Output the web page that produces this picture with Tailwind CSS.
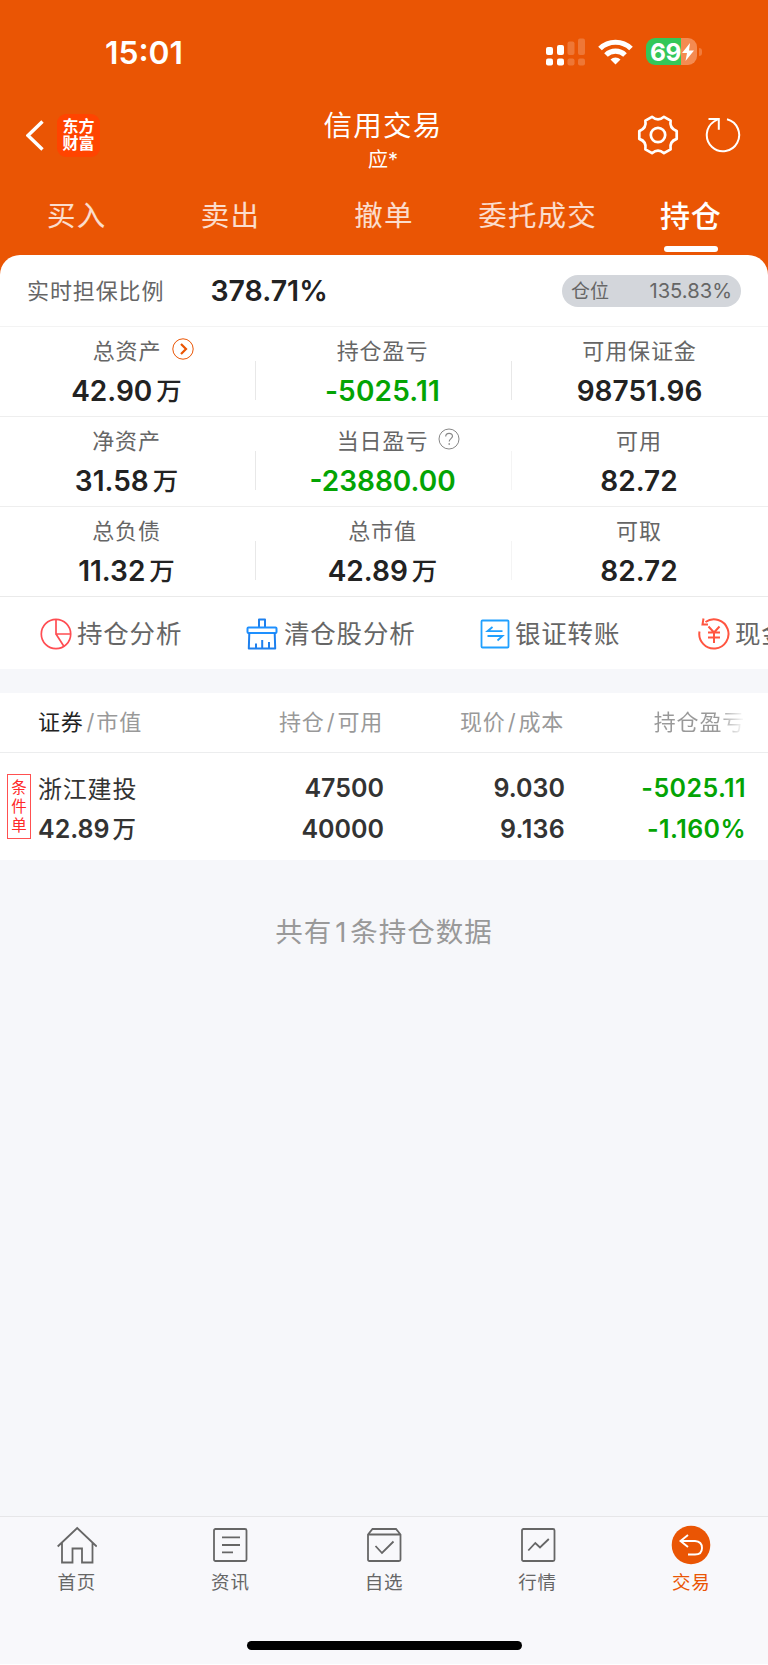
<!DOCTYPE html>
<html lang="zh-CN">
<head>
<meta charset="utf-8">
<title>信用交易</title>
<script src="https://cdn.jsdelivr.net/npm/@tailwindcss/browser@4"></script>
</head>
<body class="bg-white">
<div class="w-[768px] h-[1664px] overflow-hidden flex flex-col bg-[#f6f7fa] font-['Inter','Noto_Sans_CJK_SC',sans-serif] text-[#222]">

  <header class="h-[275px] shrink-0 bg-[#ea5504] text-white flex flex-col">
    <!-- status bar -->
    <div class="h-[104px] flex justify-between pl-[105px] pr-[66px]">
      <div class="h-[105px] flex items-center text-[31.800px] font-semibold leading-none">15:01</div>
      <div class="h-[103px] flex items-center">
        <svg class="w-[40px] h-[28px]" viewBox="0 0 40 28" fill="#fff">
          <rect x="0" y="9" width="7" height="8" rx="2"/><rect x="11" y="7" width="7" height="10" rx="2"/>
          <rect x="0" y="20.500" width="7" height="7" rx="2"/><rect x="11" y="20.500" width="7" height="7" rx="2"/>
          <g opacity=".2"><rect x="21.500" y="3.500" width="7" height="13.500" rx="2"/><rect x="32" y="0.500" width="7" height="16.500" rx="2"/><rect x="21.500" y="20.500" width="7" height="7" rx="2"/><rect x="32" y="20.500" width="7" height="7" rx="2"/></g>
        </svg>
        <svg class="w-[35px] h-[26px] ml-[12px]" viewBox="0 0 35 26" fill="none" stroke="#fff" stroke-width="5.200">
          <path d="M2 9.500a22.300 22.300 0 0 1 31 0"/><path d="M8 16a13.700 13.700 0 0 1 19 0"/><path d="M12.500 20.500a7.500 7.500 0 0 1 10 0L17.500 25.500z" fill="#fff" stroke="none"/>
        </svg>
        <div class="ml-[13px] w-[51px] h-[27px] rounded-[9px] flex items-center bg-[linear-gradient(90deg,#34c759_35px,#f48b52_35px)]">
          <span class="pl-[4px] pt-[1px] text-[24.500px] font-bold leading-[26px] tracking-[-0.500px]">69</span>
          <svg class="w-[12px] h-[18px] ml-[1px]" viewBox="0 0 12 18" fill="#fff"><path d="M8 0L0 10h5L3.500 18 12 7.500H7z"/></svg>
        </div>
        <div class="ml-[2px] w-[3px] h-[8px] rounded-r-full bg-[#f27b3a]"></div>
      </div>
    </div>
    <!-- title bar -->
    <div class="h-[76px] grid grid-cols-3">
      <div class="h-[62px] flex items-center pl-[26px]">
        <svg class="w-[18px] h-[31px]" viewBox="0 0 18 31" fill="none" stroke="#fff" stroke-width="3.400"><path d="M16.500 1.500L2 15.500l14.500 14"/></svg>
        <div class="ml-[13px] w-[43px] h-[43px] rounded-[9px] bg-[#ff4400] flex flex-col items-center justify-center text-[16px] leading-[17px] font-bold">
          <span>东方</span><span>财富</span>
        </div>
      </div>
      <div class="flex flex-col items-center pr-[2px]">
        <div class="h-[44px] flex items-center text-[28.500px] leading-none tracking-[1.300px]">信用交易</div>
        <div class="h-[24px] flex items-center text-[20px] leading-none">应*</div>
      </div>
      <div class="h-[62px] flex items-center justify-end pr-[26px] gap-[25px]">
        <svg class="w-[42px] h-[42px]" viewBox="-21 -21 42 42" fill="none" stroke="#fff" stroke-width="2.700" stroke-linejoin="round">
          <circle r="7.200"/>
          <path d="M-6 -18.200Q0 -13 6 -18.200L12.600 -14.400Q11.200 -6.500 18.700 -3.900V3.900Q11.200 6.500 12.600 14.400L6 18.200Q0 13 -6 18.200L-12.600 14.400Q-11.200 6.500 -18.700 3.900V-3.900Q-11.200 -6.500 -12.600 -14.400Z"/>
        </svg>
        <svg class="w-[38px] h-[38px]" viewBox="-19 -19 38 38" fill="none" stroke="#fff" stroke-width="2"><path d="M4 -15.700A16.200 16.200 0 1 1 -9 -13.500L-4.500 -16M-14.500 -16H-4.200V-5.300"/></svg>
      </div>
    </div>
    <!-- trade tabs -->
    <nav class="h-[75px] grid grid-cols-5 text-[28.500px] leading-none tracking-[1.200px] text-white/80">
      <div class="h-[72px] flex items-center justify-center">买入</div>
      <div class="h-[72px] flex items-center justify-center">卖出</div>
      <div class="h-[72px] flex items-center justify-center">撤单</div>
      <div class="h-[72px] flex items-center justify-center">委托成交</div>
      <div class="flex flex-col items-center text-white font-medium text-[30px] tracking-[0.800px]">
        <span class="h-[66px] pt-[6px] pr-[1px] flex items-center">持仓</span>
        <span class="w-[54px] h-[6px] rounded-full bg-white"></span>
      </div>
    </nav>
  </header>

  <main class="flex-1 flex flex-col">
    <!-- account summary -->
    <section class="-mt-[20px] h-[414px] shrink-0 rounded-t-[20px] bg-white">
      <div class="h-[72px] pt-px border-b border-[#f3f3f3] flex items-center pl-[27px] pr-[27px] leading-none">
        <span class="text-[22px] tracking-[0.900px] text-[#666]">实时担保比例</span>
        <span class="ml-[46px] text-[28.500px] font-semibold">378.71%</span>
        <div class="ml-auto w-[179px] h-[32px] rounded-full bg-[#d3d6db] flex items-center justify-between px-[9px] text-[20.200px] text-[#666]"><span class="text-[19px]">仓位</span><span>135.83%</span></div>
      </div>
      <div class="grid grid-cols-3 leading-none text-center">
        <div class="h-[90px] border-b border-[#eee] flex">
          <div class="flex-1 flex flex-col items-center pt-[8px] pr-[2px]">
            <div class="h-[32px] flex items-center text-[22px] tracking-[0.900px] text-[#666]"><i class="w-[34px]"></i>总资产<svg class="w-[22px] h-[22px] ml-[11px] mb-[5px]" viewBox="-11 -11 22 22" fill="none" stroke="#ea5504"><circle r="10.200" stroke-width="1"/><path d="M-2 -5L3 0l-5 5" stroke-width="2.200"/></svg></div>
            <div class="h-[48px] flex items-center text-[28px] font-semibold">42.90<span class="ml-[4px] font-medium text-[25.500px]">万</span></div>
          </div>
          <div class="mt-[34px] w-px h-[39px] bg-[#e8e8e8]"></div>
        </div>
        <div class="h-[90px] border-b border-[#eee] flex">
          <div class="flex-1 flex flex-col items-center pt-[8px] pr-[2px]">
            <div class="h-[32px] flex items-center text-[22px] tracking-[0.900px] text-[#666]">持仓盈亏</div>
            <div class="h-[48px] flex items-center text-[28px] font-semibold tracking-[0.200px] text-[#04a404]">-5025.11</div>
          </div>
          <div class="mt-[34px] w-px h-[39px] bg-[#e8e8e8]"></div>
        </div>
        <div class="h-[90px] border-b border-[#eee] flex flex-col items-center pt-[8px] pr-[1px]">
          <div class="h-[32px] flex items-center text-[22px] tracking-[0.900px] text-[#666]">可用保证金</div>
          <div class="h-[48px] flex items-center text-[28px] font-semibold">98751.96</div>
        </div>
        <div class="h-[90px] border-b border-[#eee] flex">
          <div class="flex-1 flex flex-col items-center pt-[8px] pr-[2px]">
            <div class="h-[32px] flex items-center text-[22px] tracking-[0.900px] text-[#666]">净资产</div>
            <div class="h-[48px] flex items-center text-[28px] font-semibold">31.58<span class="ml-[4px] font-medium text-[25.500px]">万</span></div>
          </div>
          <div class="mt-[34px] w-px h-[39px] bg-[#e8e8e8]"></div>
        </div>
        <div class="h-[90px] border-b border-[#eee] flex">
          <div class="flex-1 flex flex-col items-center pt-[8px] pr-[2px]">
            <div class="h-[32px] flex items-center text-[22px] tracking-[0.900px] text-[#666]"><i class="w-[32px]"></i>当日盈亏<svg class="w-[22px] h-[22px] ml-[10px] mb-[5px]" viewBox="-11 -11 22 22" fill="none" stroke="#888"><circle r="10" stroke-width="1"/><path d="M-3.300 -2.500C-3.300 -6.800 3.500 -6.700 3.500 -2.700C3.500 -0.500 0.200 -0.200 0.200 2.500" stroke-width="1.200"/><circle cx="0.200" cy="5" r=".5"/></svg></div>
            <div class="h-[48px] flex items-center text-[28px] font-semibold text-[#04a404]">-23880.00</div>
          </div>
          <div class="mt-[34px] w-px h-[39px] bg-[#f4f4f4]"></div>
        </div>
        <div class="h-[90px] border-b border-[#eee] flex flex-col items-center pt-[8px] pr-[2px]">
          <div class="h-[32px] flex items-center text-[22px] tracking-[0.900px] text-[#666]">可用</div>
          <div class="h-[48px] flex items-center text-[28px] font-semibold">82.72</div>
        </div>
        <div class="h-[90px] border-b border-[#eaeaea] flex">
          <div class="flex-1 flex flex-col items-center pt-[8px] pr-[2px]">
            <div class="h-[32px] flex items-center text-[22px] tracking-[0.900px] text-[#666]">总负债</div>
            <div class="h-[48px] flex items-center text-[28px] font-semibold">11.32<span class="ml-[4px] font-medium text-[25.500px]">万</span></div>
          </div>
          <div class="mt-[34px] w-px h-[39px] bg-[#e8e8e8]"></div>
        </div>
        <div class="h-[90px] border-b border-[#eaeaea] flex">
          <div class="flex-1 flex flex-col items-center pt-[8px] pr-[2px]">
            <div class="h-[32px] flex items-center text-[22px] tracking-[0.900px] text-[#666]">总市值</div>
            <div class="h-[48px] flex items-center text-[28px] font-semibold">42.89<span class="ml-[4px] font-medium text-[25.500px]">万</span></div>
          </div>
          <div class="mt-[34px] w-px h-[39px] bg-[#f4f4f4]"></div>
        </div>
        <div class="h-[90px] border-b border-[#eaeaea] flex flex-col items-center pt-[8px] pr-[2px]">
          <div class="h-[32px] flex items-center text-[22px] tracking-[0.900px] text-[#666]">可取</div>
          <div class="h-[48px] flex items-center text-[28px] font-semibold">82.72</div>
        </div>
      </div>
      <!-- shortcuts -->
      <div class="h-[72px] pt-px flex items-center pl-[40px] overflow-hidden whitespace-nowrap text-[25.500px] leading-none tracking-[0.800px] text-[#666]">
        <div class="w-[206px] shrink-0 flex items-center">
          <svg class="w-[32px] h-[32px] mr-[5px]" viewBox="-16 -16 32 32" fill="none" stroke="#ff4d52" stroke-width="1.700"><circle r="14.700"/><path d="M0 -14.700V0H14.700M0 0L8 12.500"/></svg>持仓分析
        </div>
        <div class="w-[234px] shrink-0 flex items-center">
          <svg class="w-[32px] h-[32px] mr-[6px]" viewBox="0 0 32 32" fill="none" stroke="#1e80ee" stroke-width="2" stroke-linejoin="round"><path d="M13 9.500V1.500H19V9.500"/><rect x="1.500" y="9.500" width="29" height="5.500" rx="1" stroke="#1e90ff"/><path d="M3.300 15L2.800 30.500H29.200L28.700 15M10 30V25.500M16.200 30V22M23 30V24"/></svg>清仓股分析
        </div>
        <div class="w-[217px] shrink-0 flex items-center">
          <svg class="w-[30px] h-[30px] mr-[5px]" viewBox="0 0 30 30" fill="none" stroke="#20a0ff" stroke-width="1.800"><rect x="1.500" y="1.500" width="27" height="27" rx="1"/><path d="M22.500 12.200H7.500L12.500 8M7.500 17H22.500L17.500 21.500"/></svg>银证转账
        </div>
        <div class="shrink-0 flex items-center">
          <svg class="w-[34px] h-[34px] mr-[4px]" viewBox="-17 -17 34 34" fill="none" stroke="#ff5540" stroke-width="2"><path d="M-8.500 -12A14.600 14.600 0 1 1 -14.500 -2.500M-10.500 -15.500L-11.500 -9.500L-6 -9.500M-5.500 -7.500L0 -1.500L5.500 -7.500M-6 -1.500H6M-6 3.500H6M0 -1.500V9"/></svg>现金
        </div>
      </div>
    </section>

    <!-- positions table -->
    <section class="mt-[24px] h-[167px] shrink-0 bg-white leading-none">
      <div class="h-[60px] pb-px border-b border-[#ecedee] grid grid-cols-[200px_183px_181px_181px] items-center text-[22px] tracking-[0.800px] text-[#999]">
        <div class="pl-[38px]"><span class="text-[#222]">证券</span><span class="ml-[3px] mr-[1px]">/</span>市值</div>
        <div class="text-right">持仓<span class="mx-[2px]">/</span>可用</div>
        <div class="text-right">现价<span class="mx-[2px]">/</span>成本</div>
        <div class="text-right"><span class="bg-[linear-gradient(90deg,#999_70%,#fff_100%)] bg-clip-text text-transparent">持仓盈亏</span></div>
      </div>
      <div class="h-[107px] grid grid-cols-[38px_162px_184px_181px_181px] text-[25px] font-semibold text-[#333]">
        <div class="ml-[7px] mt-[21px] w-[24px] h-[65px] border border-[#ff5050] text-[#ff2a2a] text-[15.500px] font-normal flex flex-col items-center justify-center pt-px"><span class="h-[19px] flex items-center">条</span><span class="h-[19px] flex items-center">件</span><span class="h-[19px] flex items-center">单</span></div>
        <div class="pt-[16px]"><div class="h-[41px] flex items-center font-normal text-[24px] tracking-[0.800px]">浙江建投</div><div class="h-[39px] flex items-center">42.89<span class="ml-[3px] font-medium text-[23.500px]">万</span></div></div>
        <div class="pt-[15px]"><div class="h-[41px] flex items-center justify-end">47500</div><div class="h-[40px] flex items-center justify-end">40000</div></div>
        <div class="pt-[15px]"><div class="h-[41px] flex items-center justify-end">9.030</div><div class="h-[40px] flex items-center justify-end tracking-[0.300px]">9.136</div></div>
        <div class="pt-[15px] tracking-[0.400px] text-[#04a404]"><div class="h-[41px] flex items-center justify-end">-5025.11</div><div class="h-[40px] flex items-center justify-end">-1.160%</div></div>
      </div>
    </section>
    <p class="mt-[57px] text-center text-[27.500px] leading-[30px] tracking-[1px] text-[#999]">共有<span class="mx-[3px]">1</span>条持仓数据</p>
  </main>

  <!-- bottom navigation -->
  <footer class="h-[148px] shrink-0 bg-[#f8f8fb] border-t border-[#e6e6e8] flex flex-col items-center">
    <nav class="w-full h-[124px] grid grid-cols-5 text-[18.500px] leading-none tracking-[0.800px] text-[#666]">
      <div class="flex flex-col items-center pt-[8px]">
        <svg class="w-[40px] h-[40px]" viewBox="0 0 40 40" fill="none" stroke="#666" stroke-width="1.800"><path d="M.7 21.500L20.200 3 39.700 21.500M5 18V37.500H15.500V23.500H25V37.500H35.500V18"/></svg>
        <span class="h-[34px] flex items-center">首页</span>
      </div>
      <div class="flex flex-col items-center pt-[8px]">
        <svg class="w-[40px] h-[40px]" viewBox="0 0 40 40" fill="none" stroke="#666" stroke-width="1.800"><rect x="4" y="4" width="32.500" height="32" rx="1.500"/><path d="M12 12.300H30M12 20H30M12 27.300H23"/></svg>
        <span class="h-[34px] flex items-center">资讯</span>
      </div>
      <div class="flex flex-col items-center pt-[8px]">
        <svg class="w-[40px] h-[40px]" viewBox="0 0 40 40" fill="none" stroke="#666" stroke-width="1.800"><path d="M4 9.500L8.500 4H32L36.500 9.500V34.500Q36.500 36 35 36H5.500Q4 36 4 34.500ZM4 9.500H36.500M11.500 21L18 28L29.500 16.500"/></svg>
        <span class="h-[34px] flex items-center">自选</span>
      </div>
      <div class="flex flex-col items-center pt-[8px]">
        <svg class="w-[40px] h-[40px]" viewBox="0 0 40 40" fill="none" stroke="#666" stroke-width="1.800"><rect x="4" y="4" width="32.500" height="32" rx="1.500"/><path d="M10.300 25.500L17.300 18L22 22.500L30.800 14"/></svg>
        <span class="h-[34px] flex items-center">行情</span>
      </div>
      <div class="flex flex-col items-center pt-[8px] text-[#ea5504]">
        <svg class="w-[40px] h-[40px]" viewBox="0 0 40 40" fill="none" stroke="#fff" stroke-width="1.900"><circle cx="20" cy="20" r="19.300" fill="#ea5504" stroke="none"/><path d="M17 10L9.500 16L17 22M9.500 16H24Q31 16.500 31 23Q31 29.500 24 29.500H17"/></svg>
        <span class="h-[34px] flex items-center">交易</span>
      </div>
    </nav>
    <div class="w-[275px] h-[9px] rounded-full bg-black"></div>
  </footer>
</div>
</body>
</html>
